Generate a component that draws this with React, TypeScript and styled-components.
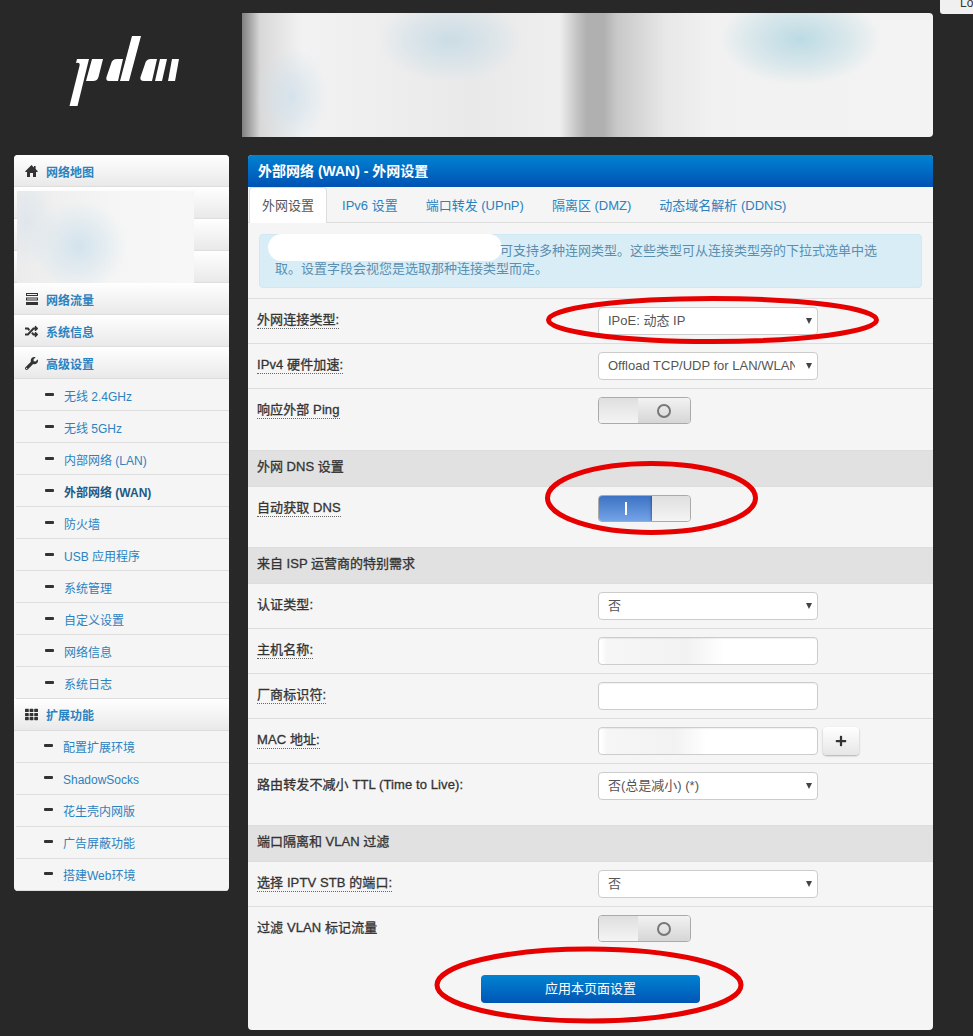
import React from "react";
import styled, { createGlobalStyle } from "styled-components";
import { FaRandom, FaWrench, FaTh, FaPlus } from "react-icons/fa";

const GlobalStyle = createGlobalStyle`
  html, body {
    margin: 0;
    padding: 0;
    height: 100%;
    overflow: hidden;
    background: #282828;
  }
  * {
    box-sizing: border-box;
  }
`;

const Page = styled.div`
  position: relative;
  width: 973px;
  height: 1036px;
  overflow: hidden;
  padding: 13px 40px 0 14px;
  background: #282828;
  font: 13px/18px "Liberation Sans", "Noto Sans CJK SC", sans-serif;
  color: #333;
`;

const LogoutButton = styled.button`
  position: absolute;
  top: -8px;
  left: 940px;
  width: 60px;
  height: 22px;
  padding: 0 0 0 20px;
  border: 0;
  border-radius: 3px;
  background: #f0f0f0;
  color: #333;
  font: 12px/18px "Liberation Sans", sans-serif;
  text-align: left;
`;

const Header = styled.header`
  display: flex;
  height: 124px;
  margin-bottom: 18px;
`;

const LogoBox = styled.div`
  flex: 0 0 228px;
  padding: 15px 0 0 46px;
`;

const Banner = styled.div`
  flex: 1;
  border-radius: 0 4px 4px 0;
  background:
    radial-gradient(ellipse 72px 42px at 208px 27px, rgba(195, 217, 228, 0.8), rgba(208, 224, 232, 0.45) 65%, transparent),
    radial-gradient(ellipse 80px 46px at 558px 26px, rgba(182, 216, 226, 0.9), rgba(198, 223, 230, 0.5) 65%, transparent),
    radial-gradient(ellipse 36px 50px at 50px 84px, rgba(208, 224, 235, 0.8), transparent),
    linear-gradient(
      90deg,
      #808080 0,
      #9c9c9c 6px,
      #d8d8d8 18px,
      #f2f2f2 60px,
      #e9e9e9 230px,
      #eeeeee 318px,
      #c4c4c4 335px,
      #b0b0b0 345px,
      #b0b0b0 362px,
      #c8c8c8 375px,
      #e8e8e8 424px,
      #f1f1f1 470px,
      #f3f3f3 690px
    );
`;

const Columns = styled.div`
  display: flex;
  align-items: flex-start;
  gap: 19px;
`;

const Sidebar = styled.nav`
  position: relative;
  flex: 0 0 215px;
  border-radius: 4px;
  background: #f5f5f5;
  overflow: hidden;
`;

const MenuRow = styled.div<{ $tight?: boolean }>`
  display: flex;
  align-items: center;
  gap: 8px;
  height: 32px;
  padding: ${(p) => (p.$tight ? "2px" : "4px")} 0 0 11px;
  border-bottom: 1px solid #ddd;
  background: linear-gradient(#fff, #e9e9e9);
  color: #2a82c0;
  font-weight: 700;
  font-size: 12px;

  & > svg {
    flex: 0 0 13px;
    color: #333;
    font-size: 13px;
    margin-top: -3px;
  }
`;

const SubRow = styled.div<{ $shift?: boolean; $active?: boolean }>`
  display: flex;
  align-items: center;
  gap: 10px;
  height: 32px;
  margin-left: 2px;
  padding: ${(p) => (p.$shift ? "2px 0 0 28px" : "4px 0 0 29px")};
  border-bottom: 1px solid #ddd;
  color: ${(p) => (p.$active ? "#1d5a85" : "#2a82c0")};
  font-size: 12px;
  font-weight: ${(p) => (p.$active ? 700 : 400)};

  &:last-child {
    border-bottom: 0;
  }
`;

const Dash = styled.span`
  flex: 0 0 9px;
  height: 3px;
  margin-top: -4px;
  border-radius: 1px;
  background: #333;
`;

const SidebarBlur = styled.div`
  position: absolute;
  top: 36px;
  left: 3px;
  width: 177px;
  height: 92px;
  background:
    radial-gradient(ellipse 48px 46px at 62px 55px, rgba(205, 225, 236, 0.85), transparent),
    radial-gradient(ellipse 30px 46px at 10px 30px, rgba(222, 230, 236, 0.9), transparent),
    linear-gradient(90deg, #ececec, #f5f5f5 55%, #f7f7f7);
`;

const Main = styled.main`
  flex: 1;
  height: 875px;
  border-radius: 4px;
  background: #f5f5f5;
  overflow: hidden;
`;

const TitleBar = styled.h1`
  height: 32px;
  margin: 0;
  padding-left: 10px;
  background: linear-gradient(#0083d1, #0052b4);
  color: #fff;
  font-size: 14px;
  font-weight: 700;
  line-height: 33px;
`;

const Tabs = styled.div`
  display: flex;
  height: 36px;
  padding-left: 1px;
  border-bottom: 1px solid #ddd;
`;

const Tab = styled.a<{ $active?: boolean }>`
  height: 36px;
  margin-right: 2px;
  padding: 9px 12px 0;
  border: 1px solid ${(p) => (p.$active ? "#ddd" : "transparent")};
  border-bottom: 0;
  border-radius: 4px 4px 0 0;
  background: ${(p) => (p.$active ? "#fff" : "transparent")};
  color: ${(p) => (p.$active ? "#555" : "#2a82c0")};
  white-space: nowrap;
`;

const Alert = styled.div`
  margin: 11px 11px 10px;
  height: 54px;
  padding: 7px 15px;
  border: 1px solid #cfe8f2;
  border-radius: 4px;
  background: #d9edf7;
  color: #5a8fb0;
  white-space: nowrap;
`;

const AlertMask = styled.span`
  display: inline-block;
  width: 234px;
  height: 27px;
  margin: -8px -2px -10px -7px;
  vertical-align: top;
  border-radius: 14px;
  background: #fff;
`;

const FormRow = styled.div<{ $height: number }>`
  display: flex;
  align-items: flex-start;
  height: ${(p) => p.$height}px;
  padding: 8px 0 0 9px;
  border-top: 1px solid #ddd;
`;

const SectionBar = styled.div`
  height: 36px;
  padding: 7px 0 0 9px;
  border-top: 1px solid #ddd;
  background: #e1e1e1;
  color: #333;
  font-size: 13px;
  -webkit-text-stroke: 0.3px #333;
`;

const LabelCell = styled.div`
  flex: 0 0 341px;
  padding-top: 4px;
`;

const Label = styled.span<{ $dotted?: boolean }>`
  color: #333;
  font-size: 13px;
  letter-spacing: 0.1px;
  -webkit-text-stroke: 0.3px #333;
  padding-bottom: 1px;
  border-bottom: ${(p) => (p.$dotted ? "1px dotted #666" : "0")};
`;

const SelectBox = styled.div`
  position: relative;
  width: 220px;

  &::after {
    content: "";
    position: absolute;
    top: 11px;
    right: 6px;
    border-style: solid;
    border-width: 6px 3px 0;
    border-color: #444 transparent transparent;
  }
`;

const Select = styled.select`
  display: block;
  width: 100%;
  height: 28px;
  padding: 0 22px 0 9px;
  border: 1px solid #ccc;
  border-radius: 4px;
  background: #fff;
  color: #555;
  font: inherit;
  appearance: none;
  outline: 0;
`;

const TextInput = styled.input<{ $blur?: number }>`
  display: block;
  width: 220px;
  height: 28px;
  padding: 0 9px;
  border: 1px solid #ccc;
  border-radius: 4px;
  background: ${(p) =>
    p.$blur
      ? `linear-gradient(90deg, #fff 2px, #f6f6f6 8px, #f2f2f2 ${p.$blur * 0.7}px, #fff ${p.$blur}px)`
      : "#fff"};
  box-shadow: inset 0 1px 1px rgba(0, 0, 0, 0.06);
  outline: 0;
`;

const InputGroup = styled.div`
  display: flex;
  gap: 5px;
`;

const AddButton = styled.button`
  display: flex;
  align-items: center;
  justify-content: center;
  width: 36px;
  height: 28px;
  padding: 0;
  border: 0;
  border-radius: 4px;
  background: linear-gradient(#fff, #e6e6e6);
  box-shadow: 0 1px 2px rgba(0, 0, 0, 0.3);
  color: #333;
  font-size: 12px;
`;

const Toggle = styled.div`
  display: flex;
  width: 93px;
  height: 27px;
  border: 1px solid #aaa;
  border-radius: 4px;
  overflow: hidden;
`;

const ToggleKnob = styled.span<{ $wide: number }>`
  flex: 0 0 ${(p) => p.$wide}px;
  background: linear-gradient(#dfdfdf, #f4f4f4);
  box-shadow: 0 0 3px rgba(0, 0, 0, 0.6);
`;

const ToggleTrack = styled.span<{ $on?: boolean }>`
  flex: 1;
  display: flex;
  align-items: center;
  justify-content: center;
  background: ${(p) =>
    p.$on ? "linear-gradient(#3d73c4, #74a3e6)" : "linear-gradient(#f2f2f2, #d6d6d6)"};
`;

const OnMark = styled.span`
  width: 2px;
  height: 13px;
  background: #fff;
`;

const OffMark = styled.span`
  width: 14px;
  height: 14px;
  border: 2px solid #777;
  border-radius: 50%;
`;

const ApplyWrap = styled.div`
  display: flex;
  justify-content: center;
  margin-top: 24px;
`;

const ApplyButton = styled.button`
  width: 219px;
  height: 28px;
  padding: 0;
  border: 0;
  border-radius: 4px;
  background: linear-gradient(#0083d1, #0056b6);
  color: #fff;
  font: inherit;
`;

const Annotations = styled.svg`
  position: absolute;
  top: 0;
  left: 0;
  pointer-events: none;
`;

const Logo = () => (
  <svg width="130" height="85" viewBox="0 0 130 85" fill="#fff">
    <path d="M17 31 L29 31 L17.5 78 L9.5 78 L19.5 38 Q20.5 34 16 35 Z" />
    <path d="M32 31 L43 31 L38.5 49 Q37.5 53 33 53 L26 53 Z" />
    <path d="M51 36 Q52 31 57 31 L63 31 L58 53 L49 53 Q45.5 53 46.5 49 Z" />
    <path d="M72 8 L81 8 L69 53 L60 53 Z" />
    <path d="M85 36 Q86 31 91 31 L97 31 L92 53 L84 53 Q79.5 53 80.5 49 Z" />
    <path d="M100 31 L107 31 L102 53 L95 53 Z" />
    <path d="M112 31 L119 31 L115 53 L108 53 Z" />
  </svg>
);

const HomeIcon = () => (
  <svg width="13" height="12" viewBox="0 0 13 12">
    <path
      fill="#333"
      d="M6.5 0 L9 2.4 V1 H10.6 V4 L13 6.4 L12 7 H11 V12 H8 V8 H5 V12 H2 V7 H1 L0 6.4 Z"
    />
  </svg>
);

const TasksIcon = () => (
  <svg width="13" height="12" viewBox="-1 0 13 12">
    <path fill="#333" d="M0 0h12v3H0z M0 4.5h12v3H0z M0 9h12v3H0z" />
    <path fill="#eee" d="M1 1h10v1H1z M1 5.5h10v1H1z" />
  </svg>
);

const firstSubs = ["无线 2.4GHz", "无线 5GHz", "内部网络 (LAN)", "外部网络 (WAN)", "防火墙", "USB 应用程序", "系统管理", "自定义设置", "网络信息", "系统日志"];
const secondSubs = ["配置扩展环境", "ShadowSocks", "花生壳内网版", "广告屏蔽功能", "搭建Web环境"];
const tabs = ["外网设置", "IPv6 设置", "端口转发 (UPnP)", "隔离区 (DMZ)", "动态域名解析 (DDNS)"];

const Choice = ({ value }: { value: string }) => (
  <SelectBox>
    <Select defaultValue={value}>
      <option>{value}</option>
    </Select>
  </SelectBox>
);

const Switch = ({ on }: { on?: boolean }) =>
  on ? (
    <Toggle>
      <ToggleTrack $on>
        <OnMark />
      </ToggleTrack>
      <ToggleKnob $wide={38} />
    </Toggle>
  ) : (
    <Toggle>
      <ToggleKnob $wide={39} />
      <ToggleTrack>
        <OffMark />
      </ToggleTrack>
    </Toggle>
  );

const Field = ({
  label,
  dotted,
  height = 45,
  children,
}: {
  label: string;
  dotted?: boolean;
  height?: number;
  children: React.ReactNode;
}) => (
  <FormRow $height={height}>
    <LabelCell>
      <Label $dotted={dotted}>{label}</Label>
    </LabelCell>
    {children}
  </FormRow>
);

export default function App() {
  return (
    <Page>
      <GlobalStyle />
      <LogoutButton>Logout</LogoutButton>
      <Header>
        <LogoBox>
          <Logo />
        </LogoBox>
        <Banner />
      </Header>
      <Columns>
        <Sidebar>
          <MenuRow>
            <HomeIcon />
            网络地图
          </MenuRow>
          <MenuRow />
          <MenuRow />
          <MenuRow />
          <MenuRow>
            <TasksIcon />
            网络流量
          </MenuRow>
          <MenuRow>
            <FaRandom />
            系统信息
          </MenuRow>
          <MenuRow>
            <FaWrench />
            高级设置
          </MenuRow>
          {firstSubs.map((item) => (
            <SubRow key={item} $active={item.includes("WAN")}>
              <Dash />
              {item}
            </SubRow>
          ))}
          <MenuRow $tight>
            <FaTh />
            扩展功能
          </MenuRow>
          {secondSubs.map((item) => (
            <SubRow key={item} $shift>
              <Dash />
              {item}
            </SubRow>
          ))}
          <SidebarBlur />
        </Sidebar>

        <Main>
          <TitleBar>外部网络 (WAN) - 外网设置</TitleBar>
          <Tabs>
            {tabs.map((tab, i) => (
              <Tab key={tab} $active={i === 0}>
                {tab}
              </Tab>
            ))}
          </Tabs>
          <Alert>
            <AlertMask />
            可支持多种连网类型。这些类型可从连接类型旁的下拉式选单中选
            <br />
            取。设置字段会视您是选取那种连接类型而定。
          </Alert>

          <Field label="外网连接类型:" dotted>
            <Choice value="IPoE: 动态 IP" />
          </Field>
          <Field label="IPv4 硬件加速:" dotted>
            <Choice value="Offload TCP/UDP for LAN/WLAN" />
          </Field>
          <Field label="响应外部 Ping" dotted height={62}>
            <Switch />
          </Field>

          <SectionBar>外网 DNS 设置</SectionBar>
          <Field label="自动获取 DNS" dotted height={61}>
            <Switch on />
          </Field>

          <SectionBar>来自 ISP 运营商的特别需求</SectionBar>
          <Field label="认证类型:">
            <Choice value="否" />
          </Field>
          <Field label="主机名称:" dotted>
            <TextInput $blur={125} />
          </Field>
          <Field label="厂商标识符:" dotted>
            <TextInput />
          </Field>
          <Field label="MAC 地址:" dotted>
            <InputGroup>
              <TextInput $blur={108} />
              <AddButton>
                <FaPlus />
              </AddButton>
            </InputGroup>
          </Field>
          <Field label="路由转发不减小 TTL (Time to Live):" height={62}>
            <Choice value="否(总是减小) (*)" />
          </Field>

          <SectionBar>端口隔离和 VLAN 过滤</SectionBar>
          <Field label="选择 IPTV STB 的端口:" dotted>
            <Choice value="否" />
          </Field>
          <Field label="过滤 VLAN 标记流量">
            <Switch />
          </Field>
          <ApplyWrap>
            <ApplyButton>应用本页面设置</ApplyButton>
          </ApplyWrap>
        </Main>
      </Columns>

      <Annotations width="973" height="1036" fill="none" stroke="#e60000" strokeWidth="5">
        <ellipse cx="712.5" cy="320" rx="164" ry="21.5" />
        <ellipse cx="651.5" cy="498" rx="104" ry="34.5" />
        <ellipse cx="589" cy="985" rx="152" ry="36" />
      </Annotations>
    </Page>
  );
}
